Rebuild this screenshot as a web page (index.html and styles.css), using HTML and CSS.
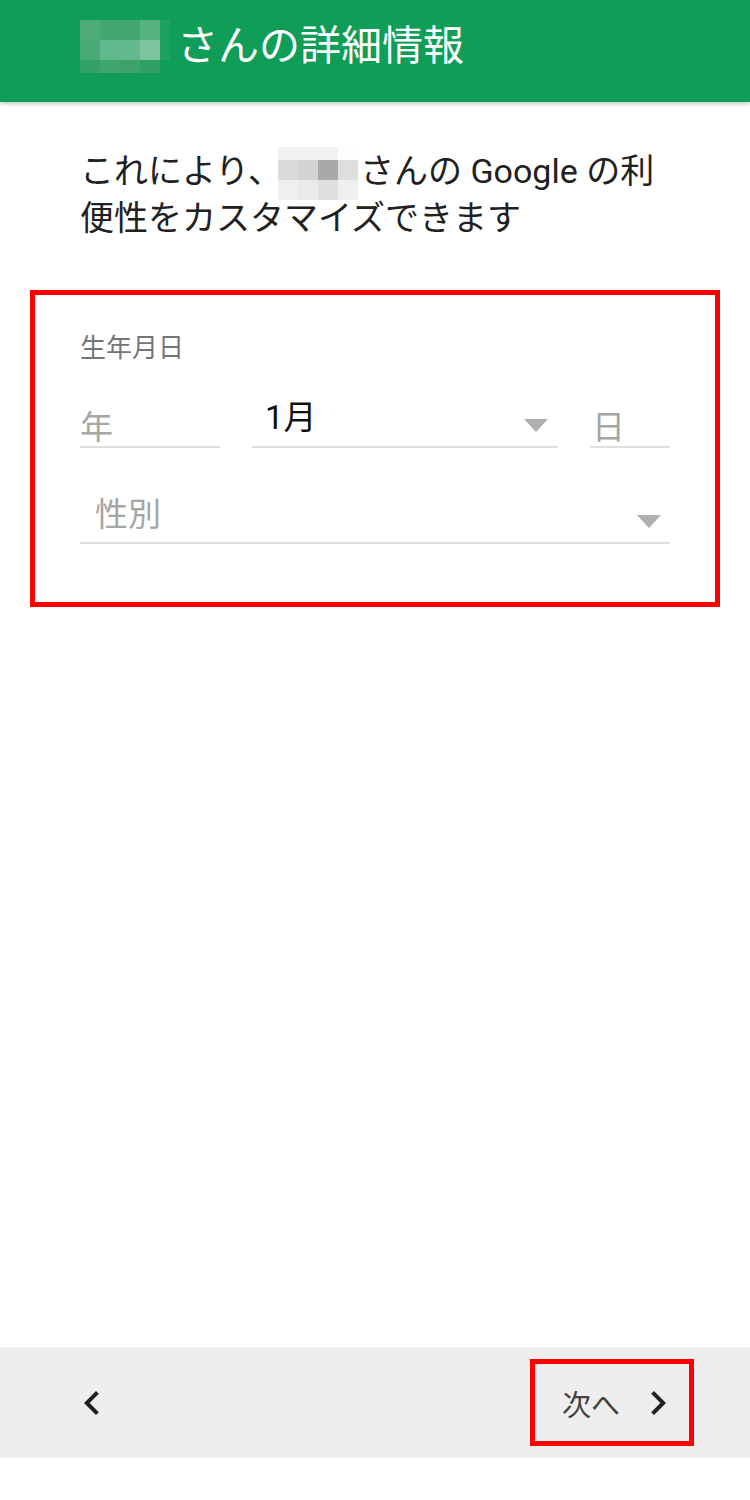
FILE: index.html
```html
<!DOCTYPE html>
<html lang="ja">
<head>
<meta charset="utf-8">
<title>詳細情報</title>
<link rel="stylesheet" href="styles.css">
</head>
<body>
<header class="appbar">
  <div class="mosaic mosaic-green" aria-hidden="true">
    <span class="g11"></span><span class="g12"></span><span class="g13"></span><span class="g14"></span><span class="g15"></span>
    <span class="g21"></span><span class="g22"></span><span class="g23"></span><span class="g24"></span><span class="g25"></span>
    <span class="g31"></span><span class="g32"></span><span class="g33"></span><span class="g34"></span><span class="g35"></span>
  </div>
  <h1 class="appbar-title">さんの詳細情報</h1>
</header>

<main class="content">
  <p class="intro">これにより、<span class="mosaic mosaic-gray" aria-hidden="true"><span class="k11"></span><span class="k12"></span><span class="k13"></span><span class="k14"></span><span class="k21"></span><span class="k22"></span><span class="k23"></span><span class="k24"></span><span class="k31"></span><span class="k32"></span><span class="k33"></span><span class="k34"></span></span>さんの Google の利<br>便性をカスタマイズできます</p>

  <section class="form-box">
    <div class="form-label">生年月日</div>
    <div class="date-row">
      <div class="field field-year"><span class="placeholder">年</span></div>
      <div class="field field-month"><span class="value">1月</span><span class="caret"></span></div>
      <div class="field field-day"><span class="placeholder">日</span></div>
    </div>
    <div class="field field-gender"><span class="placeholder gender-text">性別</span><span class="caret"></span></div>
  </section>
</main>

<footer class="navbar">
  <button class="nav-back" type="button" aria-label="戻る">
    <svg width="48" height="48" viewBox="0 0 24 24"><path d="M15.41 7.41L14 6l-6 6 6 6 1.41-1.41L10.83 12z" fill="#212121"/></svg>
  </button>
  <button class="nav-next" type="button">
    <span class="nav-next-text">次へ</span>
    <svg width="48" height="48" viewBox="0 0 24 24"><path d="M10 6L8.59 7.41 13.17 12l-4.58 4.59L10 18l6-6z" fill="#212121"/></svg>
  </button>
</footer>
<div class="system-space"></div>
</body>
</html>
```

FILE: styles.css
```css
* { box-sizing: border-box; }

html, body {
  margin: 0;
  padding: 0;
}

body {
  width: 750px;
  height: 1500px;
  display: flex;
  flex-direction: column;
  background: #ffffff;
  font-family: Roboto, "Noto Sans CJK JP", sans-serif;
  color: #212121;
  overflow: hidden;
}

/* ---------- App bar ---------- */
.appbar {
  position: relative;
  z-index: 1;
  height: 102px;
  flex: 0 0 102px;
  background: #0f9d58;
  box-shadow: 0 2px 4px rgba(0, 0, 0, 0.22);
  display: flex;
  align-items: center;
  padding: 0 0 9px 80px;
}

.appbar-title {
  margin: 0 0 9px 7px;
  font-family: "Noto Sans CJK JP", sans-serif;
  font-weight: 400;
  font-size: 41px;
  line-height: 56px;
  color: #ffffff;
}

.mosaic { display: grid; }
.mosaic span { display: block; }

.mosaic-green {
  grid-template-columns: 20px 20px 20px 20px 10px;
  grid-template-rows: 20px 20px 13px;
}
.g11 { background: #4dab78; }
.g12 { background: #44a672; }
.g13 { background: #43a570; }
.g14 { background: #56b281; }
.g15 { background: #1ea05f; }
.g21 { background: #49a974; }
.g22 { background: #60b98a; }
.g23 { background: #63ba8c; }
.g24 { background: #7dc59d; }
.g25 { background: #1ea05e; }
.g31 { background: #35a166; }
.g32 { background: #41a56e; }
.g33 { background: #3da36b; }
.g34 { background: #2f9f64; }
.g35 { background: #0f9d58; }

/* ---------- Content ---------- */
.content {
  flex: 1 1 auto;
}

.intro {
  margin: 46px 0 48px;
  padding: 0 0 0 80px;
  font-size: 34px;
  line-height: 47px;
  color: #212121;
  white-space: nowrap;
}

.mosaic-gray {
  display: inline-grid;
  vertical-align: top;
  grid-template-columns: repeat(4, 20px);
  grid-template-rows: 13px 20px 20px;
  margin: -1px 2px -6px -4px;
}
.k11 { background: #f2f2f2; }
.k12 { background: #f2f2f2; }
.k13 { background: #f2f2f2; }
.k14 { background: #fdfdfd; }
.k21 { background: #dadada; }
.k22 { background: #d3d3d3; }
.k23 { background: #a9a9a9; }
.k24 { background: #dedede; }
.k31 { background: #efefef; }
.k32 { background: #eaeaea; }
.k33 { background: #dfdfdf; }
.k34 { background: #efefef; }

.form-box {
  margin-left: 30px;
  width: 690px;
  border: 5px solid #ff0000;
  padding: 36px 45px 58px;
}

.form-label {
  font-family: "Noto Sans CJK JP", sans-serif;
  font-size: 26px;
  line-height: 30px;
  color: #757575;
}

.date-row {
  margin-top: 43px;
  display: grid;
  grid-template-columns: 140px 1fr 80px;
  column-gap: 32px;
}

.field {
  height: 44px;
  border-bottom: 2px solid #e0e0e0;
  display: flex;
  align-items: center;
  font-size: 33px;
  line-height: 40px;
}

.placeholder {
  font-family: "Noto Sans CJK JP", sans-serif;
  color: #a6a6a6;
}

.field-year { padding-left: 0; }
.field-day { padding-left: 2px; }

.field-month {
  padding: 0 10px 0 13px;
  justify-content: space-between;
}

.value {
  color: #111111;
  margin-bottom: 14px;
}

.caret {
  width: 0;
  height: 0;
  border-left: 12px solid transparent;
  border-right: 12px solid transparent;
  border-top: 13px solid #b0b0b0;
}

.field-gender {
  margin-top: 52px;
  padding: 0 9px 0 15px;
  justify-content: space-between;
}

.gender-text {
  margin-bottom: 18px;
}

/* ---------- Bottom nav ---------- */
.navbar {
  flex: 0 0 111px;
  height: 111px;
  background: #eeeeee;
  display: flex;
  align-items: center;
  justify-content: space-between;
  padding: 0 56px 0 68px;
}

.nav-back {
  border: 0;
  background: transparent;
  padding: 0;
  width: 48px;
  height: 48px;
  display: flex;
}

.nav-next {
  width: 164px;
  height: 87px;
  border: 5px solid #ff0000;
  background: transparent;
  display: flex;
  align-items: center;
  padding: 0 7px 0 27px;
  font-family: "Noto Sans CJK JP", sans-serif;
}

.nav-next-text {
  font-size: 29px;
  line-height: 40px;
  color: #424242;
  margin-right: 14px;
}

.nav-next svg { display: block; }
.nav-back svg { display: block; }

.system-space {
  flex: 0 0 42px;
  height: 42px;
  background: #ffffff;
}
```
